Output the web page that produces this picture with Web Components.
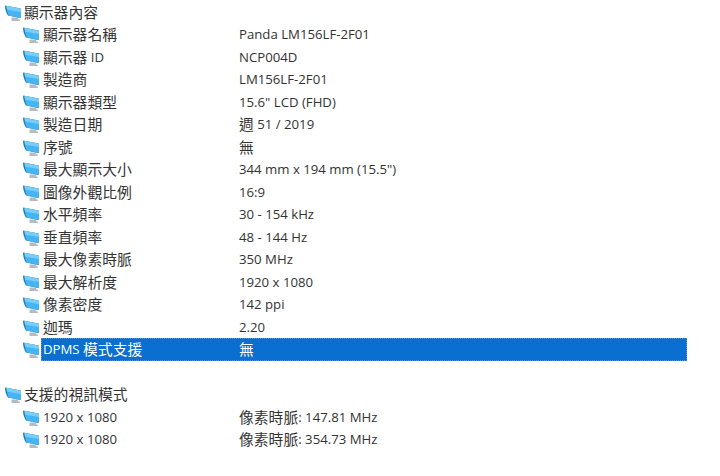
<!DOCTYPE html>
<html>
<head>
<meta charset="utf-8">
<title>顯示器內容</title>
<style>
html, body { margin: 0; background: #fff; }
body { font: 13.2px/20px "Open Sans", "Noto Sans CJK TC", sans-serif; color: #333; overflow: hidden; }
</style>
</head>
<body>
<device-tree>
  <tree-row head label="顯示器內容"></tree-row>
  <tree-row label="顯示器名稱" value="Panda LM156LF-2F01"></tree-row>
  <tree-row label="顯示器 ID" value="NCP004D"></tree-row>
  <tree-row label="製造商" value="LM156LF-2F01"></tree-row>
  <tree-row label="顯示器類型" value='15.6" LCD (FHD)'></tree-row>
  <tree-row label="製造日期" value="週 51 / 2019"></tree-row>
  <tree-row label="序號" value="無"></tree-row>
  <tree-row label="最大顯示大小" value="344 mm x 194 mm (15.5&quot;)"></tree-row>
  <tree-row label="圖像外觀比例" value="16:9"></tree-row>
  <tree-row label="水平頻率" value="30 - 154 kHz"></tree-row>
  <tree-row label="垂直頻率" value="48 - 144 Hz"></tree-row>
  <tree-row label="最大像素時脈" value="350 MHz"></tree-row>
  <tree-row label="最大解析度" value="1920 x 1080"></tree-row>
  <tree-row label="像素密度" value="142 ppi"></tree-row>
  <tree-row label="迦瑪" value="2.20"></tree-row>
  <tree-row selected label="DPMS 模式支援" value="無"></tree-row>
  <tree-row blank></tree-row>
  <tree-row head label="支援的視訊模式"></tree-row>
  <tree-row label="1920 x 1080" value="像素時脈: 147.81 MHz"></tree-row>
  <tree-row label="1920 x 1080" value="像素時脈: 354.73 MHz"></tree-row>
</device-tree>
<script>
const treeTemplate = document.createElement('template')
treeTemplate.innerHTML = `
<style>
:host { display: block; padding-top: 0.6px; }
</style>
<slot></slot>
`

class DeviceTree extends HTMLElement {
  constructor () {
    super()
    this.attachShadow({ mode: 'open' })
    this.shadowRoot.appendChild(treeTemplate.content.cloneNode(true))
  }
}

const rowTemplate = document.createElement('template')
rowTemplate.innerHTML = `
<style>
:host { display: flex; align-items: center; height: 22.5px; padding-left: 23px; }
:host([head]) { padding-left: 5px; }
svg { flex: none; width: 16px; height: 16px; margin: 2px 2px 0 0; }
#cell { display: flex; align-items: center; height: 100%; width: 646px; box-sizing: border-box; padding-left: 2px; white-space: nowrap; }
#label { width: 196px; flex: none; }
:host([head]) #cell { padding-left: 1px; }
:host([selected]) #cell { background: #0a6fd0; color: #fff; outline: 1px dotted #5d94c8; outline-offset: -1px; }
.cjk { font-size: 14.8px; line-height: 18px; vertical-align: -1px; }
</style>
<svg viewBox="0 0 16 16">
  <path d="M6.500 12.500h6.500v1.500l2 1v1H6.500z" fill="#b4bcc2"/>
  <path d="M0 0.500L15.500 3.500V13L3 10.500C1 8 0 3.500 0 0.500z" fill="#2178b4"/>
  <path d="M1.500 0.800L16 3.800V13L3.800 10.600C2.400 8 1.500 3.800 1.500 0.800z" fill="#45b4f3"/>
  <path d="M1.500 0.800L16 3.800V7L2.300 4.800C1.800 3.400 1.500 2 1.500 0.800z" fill="#78cdf9"/>
</svg>
<div id="cell"><span id="label"></span><span id="value"></span></div>
`

// one line of the list, label and value come in as attributes
class TreeRow extends HTMLElement {
  constructor () {
    super()
    this.attachShadow({ mode: 'open' })
    this.shadowRoot.appendChild(rowTemplate.content.cloneNode(true))
  }

  // the chinese glyphs sit larger than the latin ones in the original
  fill (target, text) {
    text.split(/([\u3000-\u9fff]+)/).forEach((part) => {
      if (!part) return
      if (/[\u3000-\u9fff]/.test(part)) {
        const span = document.createElement('span')
        span.className = 'cjk'
        span.textContent = part
        target.appendChild(span)
      } else {
        target.appendChild(document.createTextNode(part))
      }
    })
  }

  connectedCallback () {
    if (this.hasAttribute('blank')) {
      this.shadowRoot.querySelector('svg').style.visibility = 'hidden'
      this.shadowRoot.querySelector('#cell').style.visibility = 'hidden'
      return
    }
    this.fill(this.shadowRoot.querySelector('#label'), this.getAttribute('label'))
    this.fill(this.shadowRoot.querySelector('#value'), this.getAttribute('value') || '')
  }
}

window.customElements.define('device-tree', DeviceTree)
window.customElements.define('tree-row', TreeRow)
</script>
</body>
</html>
